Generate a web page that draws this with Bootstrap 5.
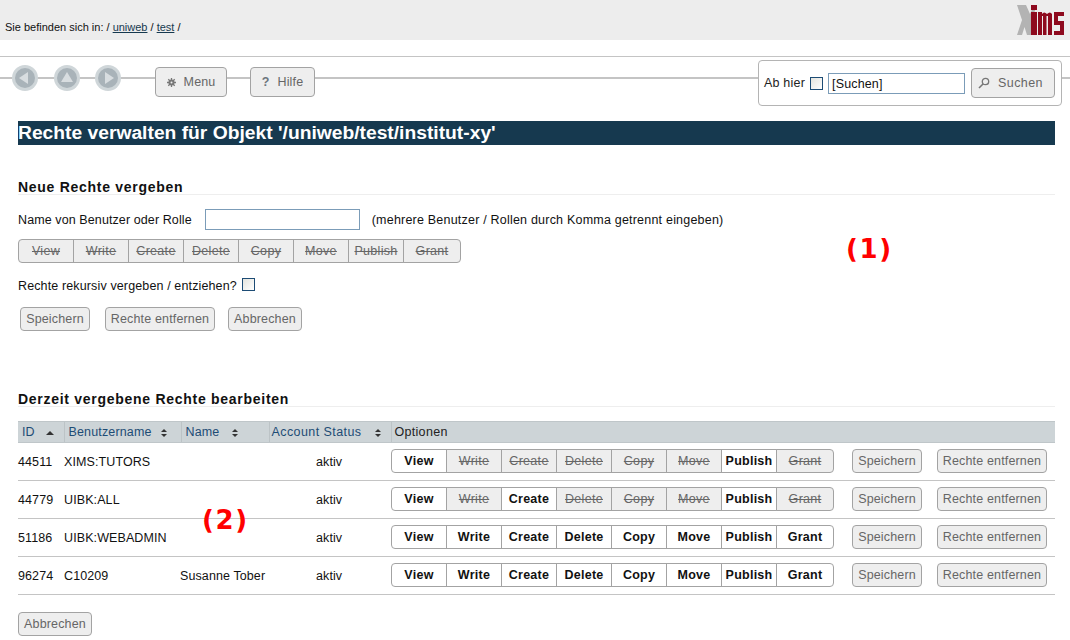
<!DOCTYPE html>
<html lang="de">
<head>
<meta charset="utf-8">
<title>Rechte verwalten</title>
<link href="https://cdn.jsdelivr.net/npm/bootstrap@5.3.0/dist/css/bootstrap.min.css" rel="stylesheet">
<style>
html,body{height:640px;overflow:hidden}
body{font-family:"Liberation Sans",Arial,sans-serif;font-size:12.5px;color:#111;background:#fff;position:relative;line-height:16px}
.topbar{height:40px;background:#ededed;padding:19px 6px 0 5px;font-size:11px}
.topbar a{color:#16394f}
.ximslogo{position:absolute;right:5px;top:5px}
.toolstrip{margin-top:16px;border-top:1px solid #c4c4c4;height:65px;padding-top:3px;background:linear-gradient(#c4c4c4,#c4c4c4) 0 20px/100% 2px no-repeat}
.discs{gap:15.5px;margin-left:12px}
.navdisc{width:26px;height:26px;margin-top:5px;flex:none}
.xbtn{--bs-btn-padding-x:0;--bs-btn-padding-y:0;--bs-btn-font-size:12.5px;--bs-btn-border-radius:4px;background:#eee;border:1px solid #a3a3a3;color:#666;letter-spacing:.15px;line-height:16px;white-space:nowrap;display:inline-flex;align-items:center;justify-content:center}
.xbtn:hover{background:#eee;border-color:#a3a3a3;color:#666}
.menubtn{height:30px;margin-top:7px}
.m1{width:72px;margin-left:34px}.m2{width:65px;margin-left:23px}
.searchbox{width:304px;height:46px;border:1px solid #b4b4b4;border-radius:4px;background:#fff;padding:0 6px 0 5px;margin-left:auto;margin-right:8px;gap:5px}
.searchbox label{letter-spacing:.2px;color:#222;white-space:nowrap}
.xcheck{appearance:none;-webkit-appearance:none;width:13px;height:13px;border:1px solid #1d4c75;background:linear-gradient(135deg,#e4e4de,#fff);border-radius:0;margin:0;flex:none}
.xinput{border:1px solid #7b9cb8;height:21px;padding:1px 3px 0;font:12.5px "Liberation Sans",Arial,sans-serif;letter-spacing:.15px;color:#111;background:#fff;border-radius:0;outline:0}
.sinput{width:137px}
.sbtn{width:84px;height:30px;margin-left:1px;letter-spacing:.4px;padding-right:5px}
.pagebody{margin:0 15px 0 18px}
.pagetitle{background:#16394f;color:#fff;font-size:19.25px;font-weight:700;line-height:24px;height:24px;margin:0 0 34px;padding:0}
.sectionhead{font-size:14px;font-weight:700;line-height:16px;letter-spacing:.72px;border-bottom:1px solid #eee;color:#111;margin:0;height:16px}
.namerow{margin-top:14px;height:21px}
.namerow label{letter-spacing:.1px;white-space:nowrap}
.namerow span{letter-spacing:.21px}
.nameinput{width:155px;margin:0 12px 0 13px}
.rights{display:inline-flex;vertical-align:top}
.rights .xbtn{width:56px;height:24px;border-radius:0;margin-left:-1px;flex:none;background:#eee;text-decoration:line-through;letter-spacing:.3px}
.rights .xbtn:first-child{margin-left:0;border-radius:4px 0 0 4px}
.rights .xbtn:last-child{border-radius:0 4px 4px 0;width:58px}
.rights .on{background:#fff;color:#111;font-weight:700;text-decoration:none;letter-spacing:.25px}
.rights .on:hover{background:#fff;color:#111}
.newrights{margin-top:9px}
.recur{margin-top:15px;height:16px;gap:5px}
.recur label{letter-spacing:.13px}
.recur .xcheck{margin-top:-3px}
.actions{margin-top:13px;margin-left:2px;height:24px;margin-bottom:60px}
.actions .xbtn,.rowbtn{height:24px}
.w1{width:70px}.w2{width:110px}.w3{width:74px}
.gapa{margin-left:15px}.gapb{margin-left:13px}
.grantstable{margin-top:14px;width:100%;table-layout:fixed;border-collapse:collapse}
.grantstable th{background:#cdd4d7;height:21px;border-top:1px solid #bfc6c9;border-bottom:1px solid #bfc6c9;font-weight:400;color:#1d4c75;letter-spacing:.15px;padding:0 0 0 4px;white-space:nowrap;position:relative}
.grantstable th+th{border-left:1px solid #bcc3c6}
.grantstable th:nth-child(4){padding-left:2px;letter-spacing:.42px}
.grantstable th:last-child{color:#222;padding-left:3px;letter-spacing:.3px}
.sorter{display:inline-block;position:absolute;top:0;bottom:0;width:9px}
.s0{left:28px}.s1{left:95px}.s2{left:49px}.s3{left:104px}
.grantstable td{height:38px;border-bottom:1px solid #c4c4c4;padding:2px 0 2px;white-space:nowrap;letter-spacing:.1px;vertical-align:middle}
.grantstable td.opts{padding:0 0 2px}
.grantstable td.stat{padding-left:47px}
.grantstable td.person{text-indent:-1px}
.rowwrap{display:flex;align-items:center}
.rowwrap .xbtn{padding-top:1px}
.rowbtn.w1{margin-left:18px}.rowbtn.w2{margin-left:15px}
.cancelbtn{margin-top:17px;display:block;width:74px;height:24px}
.anno{position:absolute;color:#f00;font-family:"DejaVu Sans",sans-serif;font-weight:700;font-size:26px;line-height:28px;letter-spacing:1.6px}
.a1{left:846px;top:235px}.a2{left:202px;top:506px}
</style>
</head>
<body>
<div class="topbar">Sie befinden sich in: / <a href="#">uniweb</a> / <a href="#">test</a> /
  <svg class="ximslogo" width="48" height="30" viewBox="0 0 48 30" aria-hidden="true">
    <path d="M0 0H9L13 9 17 0H20L15 14V30H10L7.500 22 5 30H0L5 15Z" fill="#b3b3b3"/>
    <path d="M14 7H20V30H14ZM14 0H20V5H14Z" fill="#8e0a1e"/>
    <path d="M21 30V7H25V9Q27 6 30 9 33 6 35 9V30H31V11H29.500V30H26V11H25V30Z" fill="#8e0a1e"/>
    <path d="M37 7H47V11H41V16H47V30H37V26H43V20H37Z" fill="#8e0a1e"/>
  </svg>
</div>
<div class="toolstrip d-flex align-items-start">
  <div class="d-flex discs">
    <svg class="navdisc" viewBox="0 0 26 26"><circle cx="13" cy="13" r="13" fill="#cfd6d9"/><circle cx="13" cy="13" r="10" fill="#a9b3b9"/><polygon points="7,13 16,7 16,19" fill="#d8dde0"/></svg>
    <svg class="navdisc" viewBox="0 0 26 26"><circle cx="13" cy="13" r="13" fill="#cfd6d9"/><circle cx="13" cy="13" r="10" fill="#a9b3b9"/><polygon points="13,7 19,17 7,17" fill="#d8dde0"/></svg>
    <svg class="navdisc" viewBox="0 0 26 26"><circle cx="13" cy="13" r="13" fill="#cfd6d9"/><circle cx="13" cy="13" r="10" fill="#a9b3b9"/><polygon points="19,13 10,7 10,19" fill="#d8dde0"/></svg>
  </div>
  <a href="#" class="btn xbtn menubtn m1 gap-2"><svg width="9" height="9" viewBox="0 0 9 9"><circle cx="4.500" cy="4.500" r="3" fill="#777"/><path d="M4.500 0v9M0 4.500h9M1.300 1.300l6.400 6.400M7.700 1.300L1.300 7.700" stroke="#777" stroke-width="1.300"/><circle cx="4.500" cy="4.500" r="1" fill="#eee"/></svg>Menu</a>
  <a href="#" class="btn xbtn menubtn m2 gap-2"><b class="text-secondary">?</b>Hilfe</a>
  <form class="searchbox d-flex align-items-center">
    <label for="sub">Ab hier</label>
    <input id="sub" type="checkbox" class="xcheck">
    <input type="text" class="xinput sinput" value="[Suchen]" aria-label="Suchen">
    <button type="button" class="btn xbtn sbtn gap-2"><svg width="12" height="12" viewBox="0 0 12 12"><circle cx="7.500" cy="4.500" r="3.200" fill="none" stroke="#777" stroke-width="1.300"/><path d="M5 7L1 11" stroke="#777" stroke-width="1.600"/></svg>Suchen</button>
  </form>
</div>
<main class="pagebody">
  <h1 class="pagetitle">Rechte verwalten für Objekt '/uniweb/test/institut-xy'</h1>
  <h2 class="sectionhead">Neue Rechte vergeben</h2>
  <div class="namerow d-flex align-items-center">
    <label for="nm">Name von Benutzer oder Rolle</label>
    <input id="nm" type="text" class="xinput nameinput">
    <span>(mehrere Benutzer / Rollen durch Komma getrennt eingeben)</span>
  </div>
  <div class="newrights">
    <div class="rights">
      <button class="btn xbtn">View</button><button class="btn xbtn">Write</button><button class="btn xbtn">Create</button><button class="btn xbtn">Delete</button><button class="btn xbtn">Copy</button><button class="btn xbtn">Move</button><button class="btn xbtn">Publish</button><button class="btn xbtn">Grant</button>
    </div>
  </div>
  <div class="recur d-flex align-items-center"><label for="rk">Rechte rekursiv vergeben / entziehen?</label><input id="rk" type="checkbox" class="xcheck"></div>
  <div class="actions d-flex">
    <button class="btn xbtn w1">Speichern</button>
    <button class="btn xbtn w2 gapa">Rechte entfernen</button>
    <button class="btn xbtn w3 gapb">Abbrechen</button>
  </div>
  <h2 class="sectionhead">Derzeit vergebene Rechte bearbeiten</h2>
  <table class="grantstable">
    <colgroup><col style="width:46px"><col style="width:117px"><col style="width:88px"><col style="width:122px"><col></colgroup>
    <thead><tr>
      <th>ID<svg class="sorter s0" viewBox="0 0 9 22"><polygon points="0,13 8,13 4,9" fill="#333"/></svg></th>
      <th>Benutzername<svg class="sorter s1" viewBox="0 0 9 22"><polygon points="1,10 7,10 4,7" fill="#333"/><polygon points="1,12 7,12 4,15" fill="#333"/></svg></th>
      <th>Name<svg class="sorter s2" viewBox="0 0 9 22"><polygon points="1,10 7,10 4,7" fill="#333"/><polygon points="1,12 7,12 4,15" fill="#333"/></svg></th>
      <th>Account Status<svg class="sorter s3" viewBox="0 0 9 22"><polygon points="1,10 7,10 4,7" fill="#333"/><polygon points="1,12 7,12 4,15" fill="#333"/></svg></th>
      <th>Optionen</th>
    </tr></thead>
    <tbody>
      <tr><td>44511</td><td>XIMS:TUTORS</td><td></td><td class="stat">aktiv</td><td class="opts"><div class="rowwrap"><div class="rights"><button class="btn xbtn on">View</button><button class="btn xbtn">Write</button><button class="btn xbtn">Create</button><button class="btn xbtn">Delete</button><button class="btn xbtn">Copy</button><button class="btn xbtn">Move</button><button class="btn xbtn on">Publish</button><button class="btn xbtn">Grant</button></div><button class="btn xbtn rowbtn w1">Speichern</button><button class="btn xbtn rowbtn w2">Rechte entfernen</button></div></td></tr>
      <tr><td>44779</td><td>UIBK:ALL</td><td></td><td class="stat">aktiv</td><td class="opts"><div class="rowwrap"><div class="rights"><button class="btn xbtn on">View</button><button class="btn xbtn">Write</button><button class="btn xbtn on">Create</button><button class="btn xbtn">Delete</button><button class="btn xbtn">Copy</button><button class="btn xbtn">Move</button><button class="btn xbtn on">Publish</button><button class="btn xbtn">Grant</button></div><button class="btn xbtn rowbtn w1">Speichern</button><button class="btn xbtn rowbtn w2">Rechte entfernen</button></div></td></tr>
      <tr><td>51186</td><td>UIBK:WEBADMIN</td><td></td><td class="stat">aktiv</td><td class="opts"><div class="rowwrap"><div class="rights"><button class="btn xbtn on">View</button><button class="btn xbtn on">Write</button><button class="btn xbtn on">Create</button><button class="btn xbtn on">Delete</button><button class="btn xbtn on">Copy</button><button class="btn xbtn on">Move</button><button class="btn xbtn on">Publish</button><button class="btn xbtn on">Grant</button></div><button class="btn xbtn rowbtn w1">Speichern</button><button class="btn xbtn rowbtn w2">Rechte entfernen</button></div></td></tr>
      <tr><td>96274</td><td>C10209</td><td class="person">Susanne Tober</td><td class="stat">aktiv</td><td class="opts"><div class="rowwrap"><div class="rights"><button class="btn xbtn on">View</button><button class="btn xbtn on">Write</button><button class="btn xbtn on">Create</button><button class="btn xbtn on">Delete</button><button class="btn xbtn on">Copy</button><button class="btn xbtn on">Move</button><button class="btn xbtn on">Publish</button><button class="btn xbtn on">Grant</button></div><button class="btn xbtn rowbtn w1">Speichern</button><button class="btn xbtn rowbtn w2">Rechte entfernen</button></div></td></tr>
    </tbody>
  </table>
  <button class="btn xbtn cancelbtn">Abbrechen</button>
</main>
<div class="anno a1">(1)</div>
<div class="anno a2">(2)</div>
<script src="https://cdn.jsdelivr.net/npm/bootstrap@5.3.0/dist/js/bootstrap.bundle.min.js"></script>
</body>
</html>
